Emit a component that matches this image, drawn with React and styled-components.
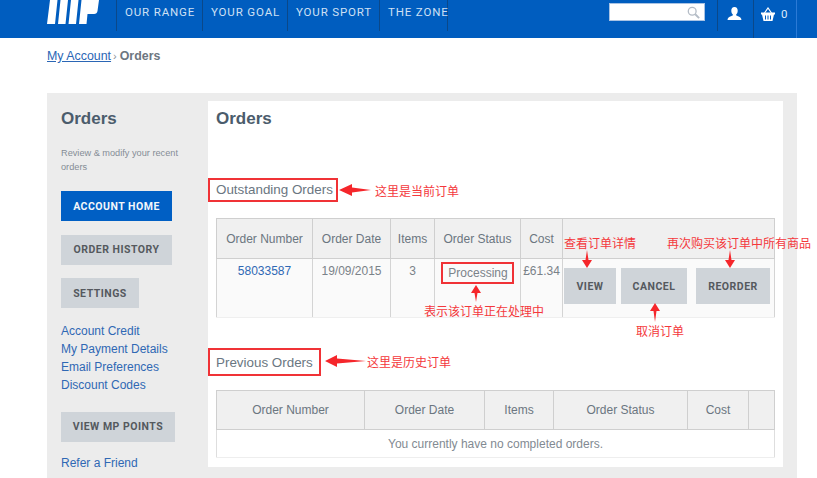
import React from "react";
import styled, { createGlobalStyle } from "styled-components";

const GlobalStyle = createGlobalStyle`
    html, body {
        margin: 0;
        padding: 0;
        height: 478px;
        overflow: hidden;
        background: #fff;
    }
    body {
        font-family: "Liberation Sans", Arial, sans-serif;
        color: #6f7a84;
    }
`;

const NAV = [
    { label: "OUR RANGE", width: 86 },
    { label: "YOUR GOAL", width: 85 },
    { label: "YOUR SPORT", width: 92 },
    { label: "THE ZONE", width: 68 },
];
const SIDE_LINKS = ["Account Credit", "My Payment Details", "Email Preferences", "Discount Codes"];

const App = () => {
    return (
        <Page>
            <GlobalStyle />
            <Header>
                <Logo viewBox="0 0 52 24">
                    <path d="M0 24 L3 0 H10.5 L8 24 Z M11 24 L13.5 0 H21 L18.5 24 Z M21.5 24 L24 0 H31.5 L29 24 Z" fill="#fff" />
                    <path d="M32 24 L34.5 0 H52 L50.5 11 Q50 14 47 14 H40.500 L39.500 24 Z" fill="#fff" />
                </Logo>
                <Nav>
                    {NAV.map((item) => (
                        <NavItem key={item.label} $width={item.width}>{item.label}</NavItem>
                    ))}
                </Nav>
                <Search>
                    <svg width="13" height="13" viewBox="0 0 15 15" fill="none" stroke="#b4bcc6" strokeWidth="1.500">
                        <circle cx="6" cy="6" r="4.500" />
                        <path d="M9.500 9.500 L14 14" strokeWidth="2.200" />
                    </svg>
                </Search>
                <IconCell $width={36} $pad={9}>
                    <svg width="15" height="13" viewBox="0 0 17 15" fill="#fff">
                        <path d="M8.500 0 C11 0 12.200 2 12.200 4.200 C12.200 6 11.500 7.500 10.500 8.500 V9.800 C13 10.800 16.500 11.500 16.500 15 H0.500 C0.500 11.500 4 10.800 6.500 9.800 V8.500 C5.500 7.500 4.800 6 4.800 4.200 C4.800 2 6 0 8.500 0 Z" />
                    </svg>
                </IconCell>
                <IconCell $width={44} $pad={7}>
                    <svg width="14" height="14" viewBox="0 0 14 14">
                        <path d="M3.500 6 L7 1 L10.500 6" fill="none" stroke="#fff" strokeWidth="1.200" />
                        <path fillRule="evenodd" fill="#fff" d="M0 5.500 H14 V7.500 H13 L11.500 14 H2.500 L1 7.500 H0 Z M4 8.500 V12.500 H5 V8.500 Z M6.500 8.500 V12.500 H7.500 V8.500 Z M9 8.500 V12.500 H10 V8.500 Z" />
                    </svg>
                    <Count>0</Count>
                </IconCell>
            </Header>

            <Breadcrumb>
                <a href="#account">My Account</a>
                <Sep>›</Sep>
                <strong>Orders</strong>
            </Breadcrumb>

            <Panel>
                <Sidebar>
                    <SideTitle>Orders</SideTitle>
                    <SideText>Review &amp; modify your recent orders</SideText>
                    <SideButton $primary $width={111}>ACCOUNT HOME</SideButton>
                    <SideButton $width={111}>ORDER HISTORY</SideButton>
                    <SideButton $width={78}>SETTINGS</SideButton>
                    <SideLinks>
                        {SIDE_LINKS.map((link) => (
                            <li key={link}><a href="#link">{link}</a></li>
                        ))}
                    </SideLinks>
                    <SideButton $width={114}>VIEW MP POINTS</SideButton>
                    <Refer href="#refer">Refer a Friend</Refer>
                </Sidebar>

                <Main>
                    <MainTitle>Orders</MainTitle>
                    <Section $top={49}>
                        <SectionTitle>Outstanding Orders</SectionTitle>
                    </Section>
                    <Table>
                        <colgroup>
                            <Col $w={96} /><Col $w={78} /><Col $w={44} /><Col $w={86} /><Col $w={42} /><col />
                        </colgroup>
                        <thead>
                            <tr>
                                <Th $h={40}>Order Number</Th>
                                <Th $h={40}>Order Date</Th>
                                <Th $h={40}>Items</Th>
                                <Th $h={40}>Order Status</Th>
                                <Th $h={40}>Cost</Th>
                                <Th $h={40} />
                            </tr>
                        </thead>
                        <tbody>
                            <tr>
                                <Td><OrderLink href="#order">58033587</OrderLink></Td>
                                <Td>19/09/2015</Td>
                                <Td>3</Td>
                                <Td><StatusBox>Processing</StatusBox></Td>
                                <Td>£61.34</Td>
                                <ActionCell>
                                    <Actions>
                                        <ActionButton $width={52}>VIEW</ActionButton>
                                        <ActionButton $width={66}>CANCEL</ActionButton>
                                        <ActionButton $width={74} $gap={4}>REORDER</ActionButton>
                                    </Actions>
                                </ActionCell>
                            </tr>
                        </tbody>
                    </Table>

                    <Section $top={30} $bottom={14}>
                        <SectionTitle $tall>Previous Orders</SectionTitle>
                    </Section>
                    <Table>
                        <colgroup>
                            <Col $w={148} /><Col $w={120} /><Col $w={69} /><Col $w={134} /><Col $w={61} /><col />
                        </colgroup>
                        <thead>
                            <tr>
                                <Th>Order Number</Th>
                                <Th>Order Date</Th>
                                <Th>Items</Th>
                                <Th>Order Status</Th>
                                <Th>Cost</Th>
                                <Th />
                            </tr>
                        </thead>
                        <tbody>
                            <tr>
                                <EmptyCell colSpan={6}>You currently have no completed orders.</EmptyCell>
                            </tr>
                        </tbody>
                    </Table>
                </Main>
            </Panel>

            {/* red notes someone drew over the screenshot */}
            <Note $x={375} $y={183}>这里是当前订单</Note>
            <Note $x={424} $y={303}>表示该订单正在处理中</Note>
            <Note $x={564} $y={235}>查看订单详情</Note>
            <Note $x={667} $y={235}>再次购买该订单中所有商品</Note>
            <Note $x={636} $y={323}>取消订单</Note>
            <Note $x={367} $y={354}>这里是历史订单</Note>

            <Arrows viewBox="0 0 817 478">
                <path d="M339 190 L352 184 L352 187.500 L371 190 L352 192.500 L352 196 Z" />
                <path d="M325 361 L337 355 L337 358.500 L366 361 L337 363.500 L337 367 Z" />
                <path d="M476 285 L471 293 L474.500 293 L476 302 L477.500 293 L481 293 Z" />
                <path d="M587 268 L582 260 L585.500 260 L587 250 L588.500 260 L592 260 Z" />
                <path d="M730 268 L725 260 L728.500 260 L730 250 L731.500 260 L735 260 Z" />
                <path d="M655 303 L650 311 L653.500 311 L655 322 L656.500 311 L660 311 Z" />
            </Arrows>
        </Page>
    );
};

export default App;

const Page = styled.div`
    position: relative;
    width: 817px;
    height: 478px;
    overflow: hidden;
`;

const Header = styled.header`
    display: flex;
    align-items: flex-start;
    box-sizing: border-box;
    height: 38px;
    padding: 0 20px 0 47px;
    background: #005dbf;
`;

const Logo = styled.svg`
    width: 52px;
    height: 24px;
    flex: none;
    margin-right: 18px;
`;

const Nav = styled.nav`
    display: flex;
    height: 31px;
    flex: none;
    margin-left: -1px;
    border-left: 1px solid #0b4889;
`;

const NavItem = styled.div`
    box-sizing: border-box;
    width: ${({ $width }) => $width}px;
    padding: 5px 0 0 8px;
    border-right: 1px solid #0b4889;
    font-family: Roboto, "Liberation Sans", sans-serif;
    font-size: 11.5px;
    line-height: 14px;
    letter-spacing: 0.85px;
    color: #cfe0f4;
    white-space: nowrap;
`;

const Search = styled.div`
    display: flex;
    align-items: center;
    justify-content: flex-end;
    box-sizing: border-box;
    width: 96px;
    height: 18px;
    margin: 3px 12px 0 auto;
    padding-right: 4px;
    background: #fff;
    border: 1px solid #a9c3e4;
`;

const IconCell = styled.div`
    display: flex;
    align-items: center;
    gap: 6px;
    box-sizing: border-box;
    width: ${({ $width }) => $width}px;
    height: 31px;
    padding: 0 0 4px ${({ $pad }) => $pad}px;
    border-left: 1px solid #0b4889;
    &:last-child {
        height: 38px;
        padding-bottom: 11px;
        border-right: 1px solid #2b7ad6;
    }
`;

const Count = styled.span`
    font-family: Roboto, sans-serif;
    font-size: 11.5px;
    color: #dfeafa;
`;

const Breadcrumb = styled.div`
    height: 55px;
    padding: 10px 0 0 47px;
    box-sizing: border-box;
    font-size: 12.4px;
    line-height: 16px;
    color: #6d7680;

    a {
        color: #2b66b5;
    }
`;

const Sep = styled.span`
    margin: 0 3px 0 2px;
    font-size: 11px;
    color: #8b939b;
`;

const Panel = styled.div`
    display: flex;
    align-items: flex-start;
    width: 750px;
    height: 400px;
    margin-left: 47px;
    padding: 8px 14px 0 0;
    box-sizing: border-box;
    background: #ececec;
`;

const Sidebar = styled.aside`
    width: 161px;
    flex: none;
    padding: 8px 0 0 14px;
    box-sizing: border-box;
`;

const SideTitle = styled.h2`
    margin: 0;
    font-size: 17px;
    line-height: 20px;
    color: #4b5c6c;
`;

const SideText = styled.p`
    width: 125px;
    margin: 17px 0 17px;
    font-size: 9.2px;
    line-height: 14px;
    color: #858d96;
`;

const SideButton = styled.div`
    display: flex;
    align-items: center;
    justify-content: center;
    width: ${({ $width }) => $width}px;
    height: 30px;
    margin-bottom: 13.5px;
    box-sizing: border-box;
    background: ${({ $primary }) => ($primary ? "#005fc4" : "#cfd4d9")};
    color: ${({ $primary }) => ($primary ? "#f2f6fb" : "#55595e")};
    font-family: Roboto, sans-serif;
    font-size: 10.5px;
    font-weight: 700;
    letter-spacing: 0.5px;
    white-space: nowrap;
`;

const SideLinks = styled.ul`
    list-style: none;
    margin: 12px 0 18px;
    padding: 0;
    font-size: 12px;
    line-height: 18px;

    a {
        color: #2f68b4;
        text-decoration: none;
    }
`;

const Refer = styled.a`
    display: block;
    font-size: 12px;
    line-height: 16px;
    color: #2f68b4;
    text-decoration: none;
`;

const Main = styled.main`
    width: 575px;
    height: 366px;
    flex: none;
    padding: 8px 8px 0;
    box-sizing: border-box;
    background: #fff;
`;

const MainTitle = styled.h1`
    margin: 0;
    font-size: 17px;
    line-height: 20px;
    color: #4b5c6c;
`;

const Section = styled.div`
    display: flex;
    margin: ${({ $top }) => $top}px 0 ${({ $bottom }) => $bottom || 16}px -8px;
`;

const SectionTitle = styled.h3`
    margin: 0;
    padding: ${({ $tall }) => ($tall ? "3px 6px 1px 6px" : "0 3px 0 6px")};
    border: 2px solid #f03236;
    font-size: 13.4px;
    font-weight: 400;
    line-height: 20px;
    color: #6a7681;
`;

const Table = styled.table`
    width: 559px;
    table-layout: fixed;
    border-collapse: collapse;
    font-size: 12px;
    color: #7a8289;
`;

const Col = styled.col`
    width: ${({ $w }) => $w}px;
`;

const Th = styled.th`
    height: ${({ $h }) => $h || 39}px;
    padding: 0;
    box-sizing: border-box;
    border: 1px solid #cfcfcf;
    background: #f0f0f0;
    font-weight: 400;
    color: #6b7680;
`;

const Td = styled.td`
    height: 59px;
    padding: 5px 0 0;
    box-sizing: border-box;
    vertical-align: top;
    text-align: center;
    border: 1px solid #d4d4d4;
    border-top-color: #cfcfcf;
    border-bottom-color: #efefef;
    background: #fafafa;
`;

const OrderLink = styled.a`
    color: #2f68b4;
    text-decoration: none;
`;

const StatusBox = styled.span`
    display: inline-block;
    margin-top: -2px;
    padding: 2px 4px 2px 5px;
    border: 2px solid #f03236;
    line-height: 14px;
`;

const ActionCell = styled(Td)`
    padding: 9px 0 0 1px;
`;

const Actions = styled.div`
    display: flex;
    gap: 5px;
`;

const ActionButton = styled.div`
    display: flex;
    align-items: center;
    justify-content: center;
    width: ${({ $width }) => $width}px;
    height: 36px;
    margin-left: ${({ $gap }) => $gap || 0}px;
    background: #cfd4d9;
    color: #55595e;
    font-family: Roboto, sans-serif;
    font-size: 10.5px;
    font-weight: 700;
    letter-spacing: 0.5px;
`;

const EmptyCell = styled.td`
    height: 28px;
    padding: 0;
    box-sizing: border-box;
    text-align: center;
    border: 1px solid #dedede;
    border-top-color: #cfcfcf;
    border-bottom-color: #eeeeee;
    background: #fff;
    color: #828a92;
`;

const Note = styled.span`
    position: absolute;
    left: ${({ $x }) => $x}px;
    top: ${({ $y }) => $y}px;
    font-family: "Noto Sans CJK SC", sans-serif;
    font-size: 12px;
    line-height: 16px;
    color: #f4383c;
    white-space: nowrap;
`;

const Arrows = styled.svg`
    position: absolute;
    left: 0;
    top: 0;
    width: 817px;
    height: 478px;
    fill: #f5262b;
    pointer-events: none;
`;
